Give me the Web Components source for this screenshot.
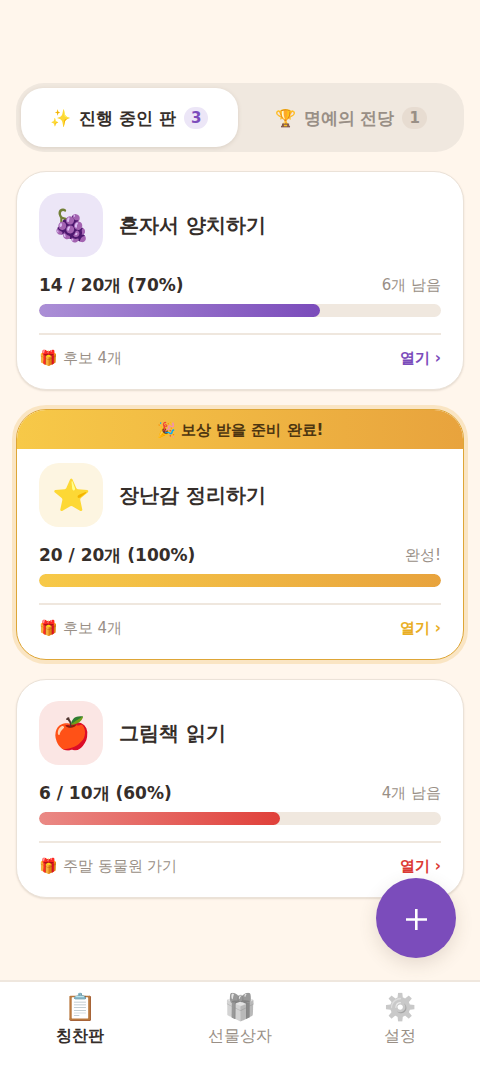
<!DOCTYPE html>
<html lang="ko">
<head>
<meta charset="utf-8">
<meta name="viewport" content="width=device-width, initial-scale=1">
<title>칭찬판</title>
<style>
html{background:#fff6ec}
body{margin:0;color:#352e2a;font-family:"DejaVu Sans",sans-serif;
--muted:#998f86;--line:#efe7de;--purple:#7b4cbb}
</style>
</head>
<body>
<praise-app>
  <board-tabs slot="tabs">
    <board-tab active count="3"><span slot="icon">✨</span>진행 중인 판</board-tab>
    <board-tab count="1"><span slot="icon">🏆</span>명예의 전당</board-tab>
  </board-tabs>
  <praise-card tone="purple" done="14" total="20" remain="6개 남음"><span slot="icon">🍇</span>혼자서 양치하기<span slot="reward">후보 4개</span></praise-card>
  <praise-card tone="gold" done="20" total="20" remain="완성!"><span slot="banner">🎉 보상 받을 준비 완료!</span><span slot="icon">⭐</span>장난감 정리하기<span slot="reward">후보 4개</span></praise-card>
  <praise-card tone="red" done="6" total="10" remain="4개 남음"><span slot="icon">🍎</span>그림책 읽기<span slot="reward">주말 동물원 가기</span></praise-card>
  <add-button slot="fab"></add-button>
  <bottom-nav slot="nav">
    <nav-item active><span slot="icon">📋</span>칭찬판</nav-item>
    <nav-item><span slot="icon">🎁</span>선물상자</nav-item>
    <nav-item><span slot="icon">⚙️</span>설정</nav-item>
  </bottom-nav>
</praise-app>
<script>
const define = (name, render) => customElements.define(name, class extends HTMLElement {
  constructor() {
    super();
    this.attachShadow({ mode: "open" });
  }
  connectedCallback() {
    this.shadowRoot.innerHTML = render(this);
  }
});

define("praise-app", () => `
<style>
:host{display:flex;flex-direction:column;min-height:100vh;background:#fff6ec}
main{flex:1;display:flex;flex-direction:column;gap:19px;padding:83px 16px 80px}
.dock{position:sticky;bottom:0}
.fab{position:absolute;right:24px;bottom:109px}
</style>
<main><slot name="tabs"></slot><slot></slot></main>
<div class="dock"><div class="fab"><slot name="fab"></slot></div><slot name="nav"></slot></div>`);

define("board-tabs", () => `
<style>
:host{display:flex;gap:5px;padding:5px;border-radius:28px;background:#f0e8df}
</style>
<slot></slot>`);

define("board-tab", el => `
<style>
:host{display:block;flex:1 1 0}
button{display:flex;align-items:center;justify-content:center;gap:8px;width:100%;height:59px;padding:0;border:0;border-radius:22px;background:none;color:var(--muted);font-family:inherit;font-size:17px;font-weight:700;line-height:24px;white-space:nowrap}
.count{padding:0 7px;border-radius:12px;background:#e7dcd1;font-size:15px;line-height:22px}
:host([active]) button{background:#fff;color:#352e2a;box-shadow:0 1px 4px #d9cfc4}
:host([active]) .count{background:#ece6f7;color:var(--purple)}
</style>
<button type="button"><slot name="icon"></slot><span><slot></slot></span><span class="count">${el.getAttribute("count")}</span></button>`);

define("praise-card", el => {
  const done = +el.getAttribute("done"), total = +el.getAttribute("total");
  const percent = Math.round(done / total * 100);
  const banner = el.querySelector('[slot="banner"]');
  return `
<style>
:host{display:block;overflow:hidden;border:1px solid #ebe2d8;border-radius:30px;background:#fff;box-shadow:0 1px 2px #e6dbcf}
:host([tone=purple]){--accent:#7b4cbb;--fill:linear-gradient(90deg,#ab8fd6,#7b4cbb);--tint:#ece6f7}
:host([tone=gold]){--accent:#e9ae23;--fill:linear-gradient(90deg,#f7c948,#e8a33d);--tint:#fdf5e1;border-color:#dea637;box-shadow:0 0 0 4px #fae5c3}
:host([tone=red]){--accent:#dc3a33;--fill:linear-gradient(90deg,#ea8985,#e0403a);--tint:#fbe6e4}
.banner{background:var(--fill);color:#4d3510;font-size:15px;font-weight:700;line-height:22px;height:39px;display:grid;place-items:center}
.body{padding:21px 22px 20px}
.banner + .body{padding-top:14px}
header,.row,footer{display:flex;align-items:center}
header{gap:16px}
.icon{display:grid;place-items:center;width:64px;height:64px;border-radius:20px;background:var(--tint);font-size:31px;line-height:40px}
h2{margin:0;font-size:20px;line-height:28px}
.row{justify-content:space-between;margin:16px 0 7px;height:24px;line-height:24px}
.row strong{font-size:17px}
.row span,footer{font-size:15px;color:var(--muted)}
.track{height:13px;border-radius:7px;background:#f0e8df;overflow:hidden}
.fill{width:${percent}%;height:100%;border-radius:7px;background:var(--fill)}
footer{justify-content:space-between;margin-top:16px;padding-top:12px;border-top:2px solid var(--line);height:22px;line-height:22px}
a{color:var(--accent);font-weight:700;text-decoration:none}
</style>
${banner ? '<div class="banner"><slot name="banner"></slot></div>' : ""}
<div class="body">
<header><div class="icon"><slot name="icon"></slot></div><h2><slot></slot></h2></header>
<div class="row"><strong>${done} / ${total}개 (${percent}%)</strong><span>${el.getAttribute("remain")}</span></div>
<div class="track" role="progressbar" aria-valuenow="${percent}" aria-valuemin="0" aria-valuemax="100"><div class="fill"></div></div>
<footer><span>🎁 <slot name="reward"></slot></span><a href="#">열기 ›</a></footer>
</div>`;
});

define("add-button", () => `
<style>
:host{display:block}
button{display:grid;place-items:center;width:80px;height:80px;padding:0;border:0;border-radius:50%;background:var(--purple);box-shadow:0 6px 18px #5a463228}
</style>
<button type="button" aria-label="추가"><svg width="24" height="24" viewBox="0 0 24 24" stroke="#fff" stroke-width="2.6"><path d="M12.3 3v21M2 13.5h21"/></svg></button>`);

define("bottom-nav", () => `
<style>
:host{display:block;background:#fff;border-top:2px solid var(--line)}
nav{display:flex;height:85px}
</style>
<nav><slot></slot></nav>`);

define("nav-item", el => `
<style>
:host{display:block;flex:1 1 0}
a{display:flex;flex-direction:column;align-items:center;padding-top:8px;color:var(--muted);text-decoration:none;font-size:16px;line-height:24px}
.icon{font-size:26px;line-height:34px;height:34px;filter:grayscale(1);opacity:.6}
:host([active]) a{color:#352e2a;font-weight:700}
:host([active]) .icon{filter:none;opacity:1}
</style>
<a href="#"><span class="icon"><slot name="icon"></slot></span><span><slot></slot></span></a>`);
</script>
</body>
</html>
